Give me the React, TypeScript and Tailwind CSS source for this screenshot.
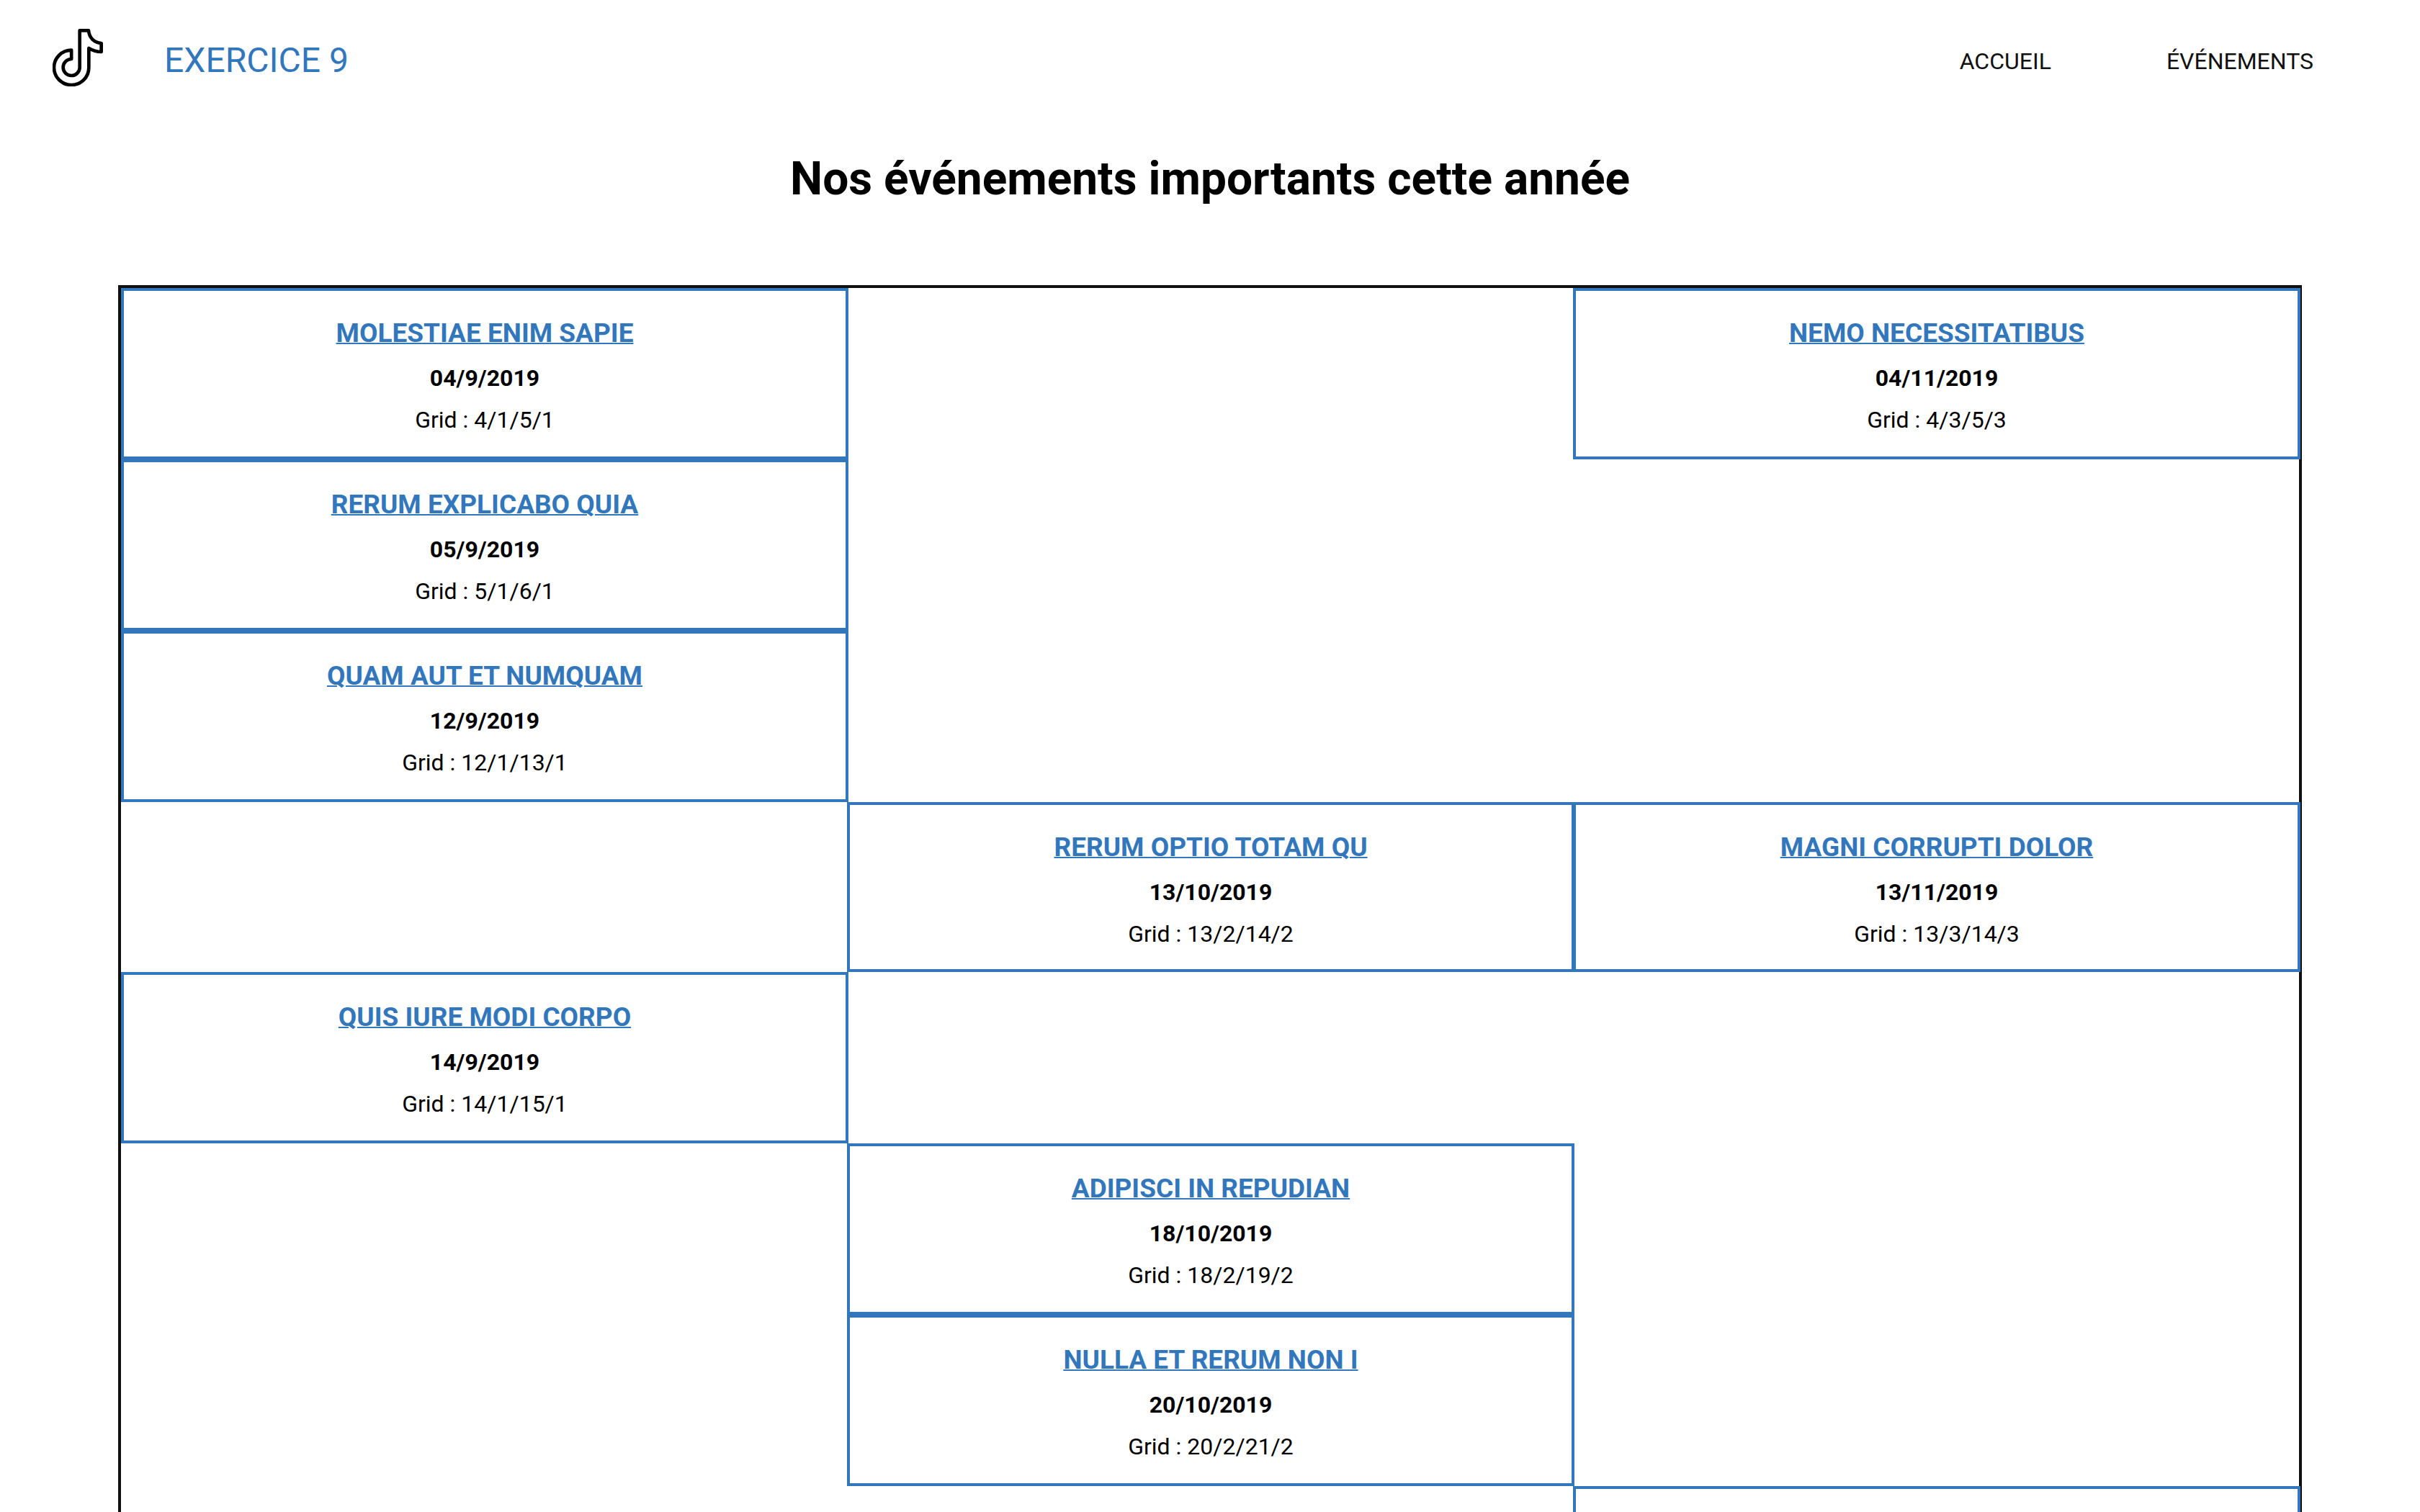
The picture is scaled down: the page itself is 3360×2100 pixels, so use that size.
type Event = { title?: string; date?: string; area?: string; cell: string };

const EVENTS: Event[] = [
  { title: "MOLESTIAE ENIM SAPIE", date: "04/9/2019", area: "4/1/5/1", cell: "col-start-1 row-start-1" },
  { title: "NEMO NECESSITATIBUS", date: "04/11/2019", area: "4/3/5/3", cell: "col-start-3 row-start-1" },
  { title: "RERUM EXPLICABO QUIA", date: "05/9/2019", area: "5/1/6/1", cell: "col-start-1 row-start-2" },
  { title: "QUAM AUT ET NUMQUAM", date: "12/9/2019", area: "12/1/13/1", cell: "col-start-1 row-start-3" },
  { title: "RERUM OPTIO TOTAM QU", date: "13/10/2019", area: "13/2/14/2", cell: "col-start-2 row-start-4" },
  { title: "MAGNI CORRUPTI DOLOR", date: "13/11/2019", area: "13/3/14/3", cell: "col-start-3 row-start-4" },
  { title: "QUIS IURE MODI CORPO", date: "14/9/2019", area: "14/1/15/1", cell: "col-start-1 row-start-5" },
  { title: "ADIPISCI IN REPUDIAN", date: "18/10/2019", area: "18/2/19/2", cell: "col-start-2 row-start-6" },
  { title: "NULLA ET RERUM NON I", date: "20/10/2019", area: "20/2/21/2", cell: "col-start-2 row-start-7" },
  { cell: "col-start-3 row-start-8" },
];

function Logo() {
  return (
    <svg viewBox="39 30 210 240" className="h-20 w-[70px]" fill="none" stroke="#000" strokeWidth="14" strokeLinejoin="round" aria-hidden="true">
      <path d="M152 37H189C191 66 212 88 242 90V126C222 126 205 120 190 111V191A72.5 72.5 0 1 1 117.500 119V156A34.500 34.500 0 1 0 152 191Z" />
    </svg>
  );
}

function EventCard({ event }: { event: Event }) {
  return (
    <article className={`-mr-0.5 border-4 border-[#3277bc] pt-9 pb-[30px] text-center ${event.cell}`}>
      {event.title && (
        <>
          <h3 className="text-[37px] leading-[46px] font-bold text-[#3277bc]">
            <a href="#" className="underline decoration-2">{event.title}</a>
          </h3>
          <p className="mt-5 font-bold">{event.date}</p>
          <p className="mt-5">Grid : {event.area}</p>
        </>
      )}
    </article>
  );
}

export default function App() {
  return (
    <div className="bg-white font-[Roboto,sans-serif] text-[32px] leading-[38px] text-black">
      <header className="flex items-center justify-between pt-10 pr-[148px] pl-[73px]">
        <div className="flex items-center gap-[85px]">
          <a href="#" aria-label="Exercice 9" className="pb-2">
            <Logo />
          </a>
          <span className="text-[48px] leading-[56px] text-[#3277bc]">EXERCICE 9</span>
        </div>
        <nav className="flex gap-40 pt-0.5 text-[#111]">
          <a href="#">ACCUEIL</a>
          <a href="#">ÉVÉNEMENTS</a>
        </nav>
      </header>
      <main>
        <h1 className="mt-[82px] text-center text-[64px] leading-[78px] font-bold">Nos événements importants cette année</h1>
        <section className="mx-auto mt-[108px] box-content grid w-9/10 auto-rows-[minmax(238px,auto)] grid-cols-3 grid-rows-[repeat(3,minmax(238px,auto))_auto] border-4 border-[#111]">
          {EVENTS.map((event) => (
            <EventCard key={event.cell} event={event} />
          ))}
        </section>
      </main>
    </div>
  );
}
